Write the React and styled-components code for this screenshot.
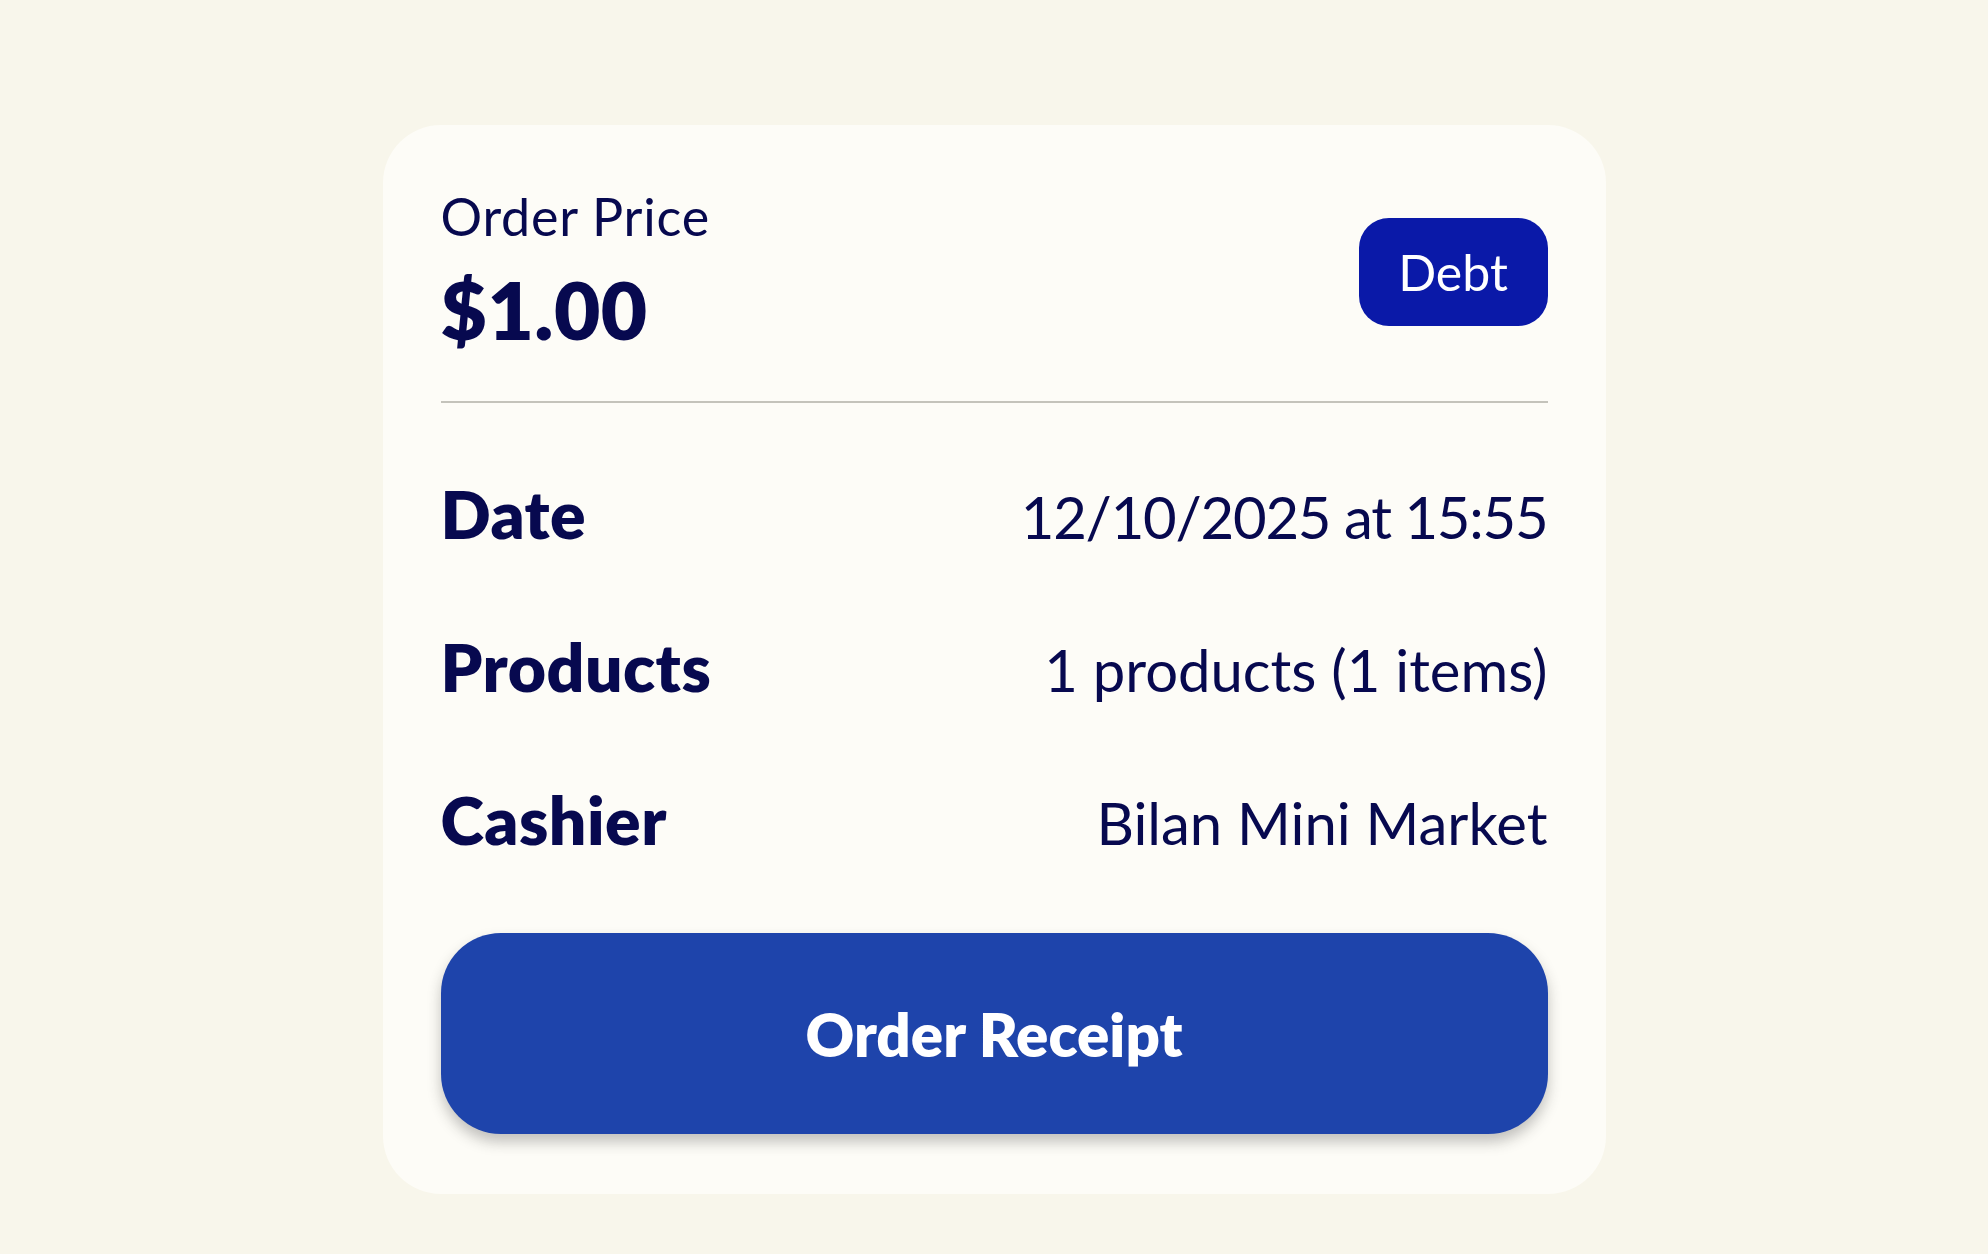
import styled, { createGlobalStyle } from "styled-components";

const GlobalStyle = createGlobalStyle`
  html, body {
    margin: 0;
    padding: 0;
    background: #f8f6eb;
  }
  body {
    font-family: "Lato", "Noto Sans", sans-serif;
    color: #07094f;
  }
`;

const Page = styled.div`
  min-height: 100vh;
  display: flex;
  justify-content: center;
  align-items: flex-start;
  padding-top: 125px;
  box-sizing: border-box;
`;

const Card = styled.div`
  width: 1223px;
  box-sizing: border-box;
  background: #fdfcf7;
  border-radius: 58px;
  padding: 61px 58px 60px;
  display: flex;
  flex-direction: column;
`;

const Header = styled.div`
  display: flex;
  justify-content: space-between;
  align-items: center;
  padding-bottom: 44px;
  border-bottom: 2px solid #c4c3bb;
`;

const PriceBlock = styled.div`
  display: flex;
  flex-direction: column;
  gap: 15px;
`;

const Label = styled.div`
  font-size: 52px;
  line-height: 60px;
  font-weight: 400;
  letter-spacing: 0.8px;
`;

const Amount = styled.div`
  font-size: 80px;
  line-height: 96px;
  font-weight: 800;
  letter-spacing: 0.5px;
`;

const Badge = styled.div`
  width: 189px;
  height: 108px;
  border-radius: 30px;
  background: #0a19a8;
  color: #ffffff;
  font-size: 50px;
  display: flex;
  align-items: center;
  justify-content: center;
`;

const Details = styled.div`
  display: flex;
  flex-direction: column;
  gap: 70px;
  padding: 71px 0 70px;
`;

const Row = styled.div`
  display: flex;
  justify-content: space-between;
  align-items: baseline;
`;

const Key = styled.div`
  font-size: 66px;
  line-height: 80px;
  font-weight: 800;
  letter-spacing: 0.5px;
`;

const Value = styled.div`
  font-size: 58px;
  line-height: 80px;
  font-weight: 400;
  letter-spacing: ${(p) => (p.$tight ? "-1.2px" : "0")};
`;

const ReceiptButton = styled.button`
  height: 201px;
  width: 100%;
  border: none;
  border-radius: 60px;
  background: #1e44ab;
  color: #ffffff;
  font-family: "Lato", "Noto Sans", sans-serif;
  font-size: 60px;
  font-weight: 800;
  box-shadow: 0 8px 14px rgba(40, 40, 40, 0.28);
  cursor: pointer;
`;

const rows = [
  { key: "Date", value: "12/10/2025 at 15:55", tight: true },
  { key: "Products", value: "1 products (1 items)" },
  { key: "Cashier", value: "Bilan Mini Market" },
];

export default function App() {
  return (
    <>
      <GlobalStyle />
      <Page>
        <Card>
          <Header>
            <PriceBlock>
              <Label>Order Price</Label>
              <Amount>$1.00</Amount>
            </PriceBlock>
            <Badge>Debt</Badge>
          </Header>
          <Details>
            {rows.map((r) => (
              <Row key={r.key}>
                <Key>{r.key}</Key>
                <Value $tight={r.tight}>{r.value}</Value>
              </Row>
            ))}
          </Details>
          <ReceiptButton>Order Receipt</ReceiptButton>
        </Card>
      </Page>
    </>
  );
}
